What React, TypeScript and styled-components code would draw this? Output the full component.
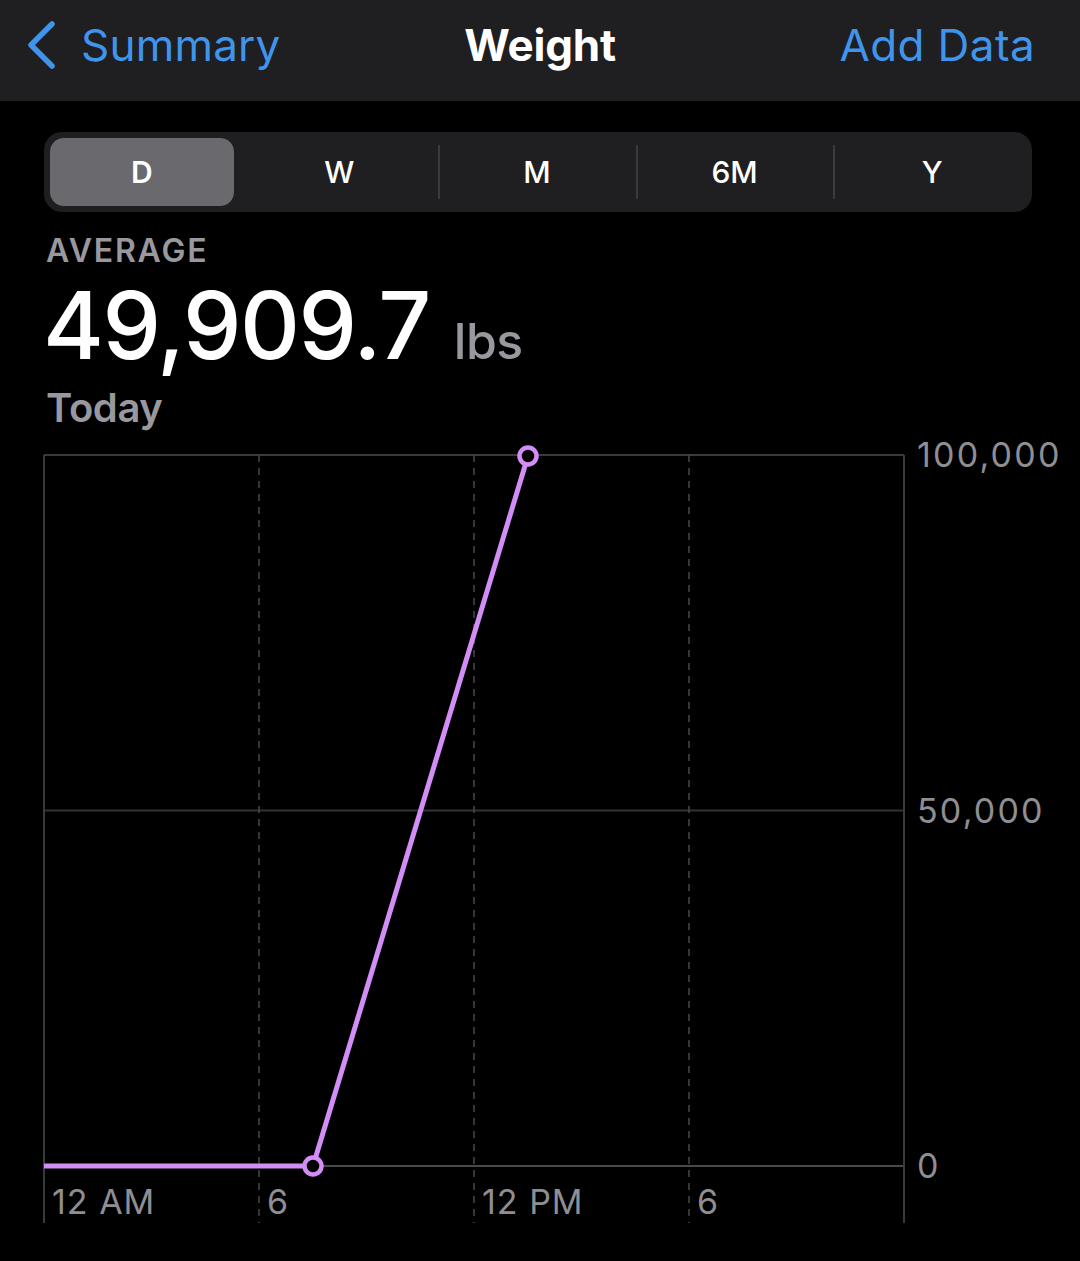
import React from 'react';
import styled, { createGlobalStyle } from 'styled-components';

const GlobalStyle = createGlobalStyle`
  html, body {
    margin: 0;
    padding: 0;
    background: #000;
  }
  body {
    font-family: Inter, "Noto Sans", "Liberation Sans", sans-serif;
    -webkit-font-smoothing: antialiased;
  }
`;

const Page = styled.div`
  width: 1080px;
  height: 1261px;
  background: #000;
  overflow: hidden;
`;

const NavBar = styled.header`
  height: 101px;
  background: #1f1f21;
  display: grid;
  grid-template-columns: 1fr auto 1fr;
  align-items: center;
  padding: 0 45px;
  box-sizing: border-box;
`;

const BackButton = styled.div`
  display: flex;
  align-items: center;
  gap: 24px;
  margin-left: -20px;
  color: #3f94ec;
  font-size: 44px;
  letter-spacing: 0.2px;
  margin-top: -12px;
`;

const Title = styled.h1`
  margin: -12px 0 0;
  color: #fff;
  font-size: 44px;
  font-weight: 700;
  letter-spacing: -0.2px;
`;

const NavAction = styled.div`
  justify-self: end;
  color: #3f94ec;
  font-size: 44px;
  letter-spacing: 0.4px;
  margin-top: -12px;
`;

const Segmented = styled.div`
  margin: 31px 48px 0 44px;
  height: 80px;
  background: #1f1f21;
  border-radius: 18px;
  display: grid;
  grid-template-columns: repeat(5, 1fr);
`;

const Segment = styled.div<{ $active?: boolean; $divider?: boolean }>`
  position: relative;
  display: flex;
  align-items: center;
  justify-content: center;
  margin: 6px 8px 6px 6px;
  color: #fff;
  font-size: 30px;
  font-weight: ${({ $active }) => ($active ? 600 : 500)};
  background: ${({ $active }) => ($active ? '#6a696e' : 'transparent')};
  border-radius: 14px;

  &::before {
    content: '';
    display: ${({ $divider }) => ($divider ? 'block' : 'none')};
    position: absolute;
    left: -7px;
    top: 7px;
    bottom: 7px;
    width: 2px;
    background: #3a3a3d;
  }
`;

const Summary = styled.section`
  padding: 0 46px;
  display: flex;
  flex-direction: column;
`;

const Label = styled.div`
  margin-top: 19px;
  color: #98989e;
  font-size: 32px;
  font-weight: 600;
  letter-spacing: 1.8px;
  line-height: 40px;
`;

const ValueRow = styled.div`
  display: flex;
  align-items: baseline;
  gap: 24px;
  line-height: 110px;
  margin-top: -1px;
`;

const Value = styled.span`
  color: #fff;
  font-size: 93px;
  font-weight: 500;
  letter-spacing: -1.5px;
  margin-left: -3px;
`;

const Unit = styled.span`
  color: #98989e;
  font-size: 50px;
  font-weight: 500;
  letter-spacing: -0.5px;
`;

const DateLabel = styled.div`
  color: #98989e;
  font-size: 40px;
  font-weight: 600;
  letter-spacing: -0.4px;
  line-height: 48px;
  margin-top: -12px;
`;

const Chart = styled.svg`
  display: block;
  margin-top: 8px;
  overflow: visible;
`;

const ChevronLeft = () => (
  <svg width="32" height="48" viewBox="0 0 32 48" fill="none">
    <path d="M27 3 L6 24 L27 45" stroke="#3f94ec" strokeWidth="5.5" strokeLinecap="round" strokeLinejoin="round" />
  </svg>
);

const TOP = 15;
const ZERO = 726;
const MID = (TOP + ZERO) / 2;
const BOTTOM = 783;
const LEFT = 44;
const RIGHT = 904;
const verticals = [259, 474, 689];
const axisColor = '#8e8e93';
const lineColor = '#d28ef6';

const WeightChart = () => (
  <Chart width="1080" height="800" viewBox="0 0 1080 800">
    <line x1={LEFT} y1={TOP} x2={RIGHT} y2={TOP} stroke="#3a3a3c" strokeWidth="2" />
    <line x1={LEFT} y1={MID} x2={RIGHT} y2={MID} stroke="#333335" strokeWidth="2" />
    <line x1={LEFT} y1={ZERO} x2={RIGHT} y2={ZERO} stroke="#4a4a4c" strokeWidth="2" />
    <line x1={LEFT} y1={TOP} x2={LEFT} y2={BOTTOM} stroke="#3a3a3c" strokeWidth="2" />
    <line x1={RIGHT} y1={TOP} x2={RIGHT} y2={BOTTOM} stroke="#3a3a3c" strokeWidth="2" />
    {verticals.map((x) => (
      <line key={x} x1={x} y1={TOP} x2={x} y2={BOTTOM} stroke="#48484a" strokeWidth="1.5" strokeDasharray="7 6" />
    ))}

    <g fill={axisColor} fontSize="34" fontFamily="Inter, 'Liberation Sans', sans-serif">
      <g letterSpacing="2.2">
        <text x="917" y={TOP + 12}>100,000</text>
        <text x="917" y={MID + 12}>50,000</text>
        <text x="917" y={ZERO + 12}>0</text>
      </g>
      <g letterSpacing="1">
        <text x="52" y="774">12 AM</text>
        <text x="267" y="774">6</text>
        <text x="482" y="774">12 PM</text>
        <text x="697" y="774">6</text>
      </g>
    </g>

    <polyline
      points={`${LEFT},${ZERO} 313,${ZERO} 528,${TOP + 1}`}
      fill="none"
      stroke={lineColor}
      strokeWidth="5"
      strokeLinejoin="round"
    />
    <circle cx="313" cy={ZERO} r="8.5" fill="#000" stroke={lineColor} strokeWidth="4.5" />
    <circle cx="528" cy={TOP + 1} r="8.5" fill="#000" stroke={lineColor} strokeWidth="4.5" />
  </Chart>
);

const periods = ['D', 'W', 'M', '6M', 'Y'];

export default function App() {
  return (
    <Page>
      <GlobalStyle />
      <NavBar>
        <BackButton>
          <ChevronLeft />
          <span>Summary</span>
        </BackButton>
        <Title>Weight</Title>
        <NavAction>Add Data</NavAction>
      </NavBar>

      <Segmented>
        {periods.map((p, i) => (
          <Segment key={p} $active={i === 0} $divider={i > 1}>
            {p}
          </Segment>
        ))}
      </Segmented>

      <Summary>
        <Label>AVERAGE</Label>
        <ValueRow>
          <Value>49,909.7</Value>
          <Unit>lbs</Unit>
        </ValueRow>
        <DateLabel>Today</DateLabel>
      </Summary>

      <WeightChart />
    </Page>
  );
}
